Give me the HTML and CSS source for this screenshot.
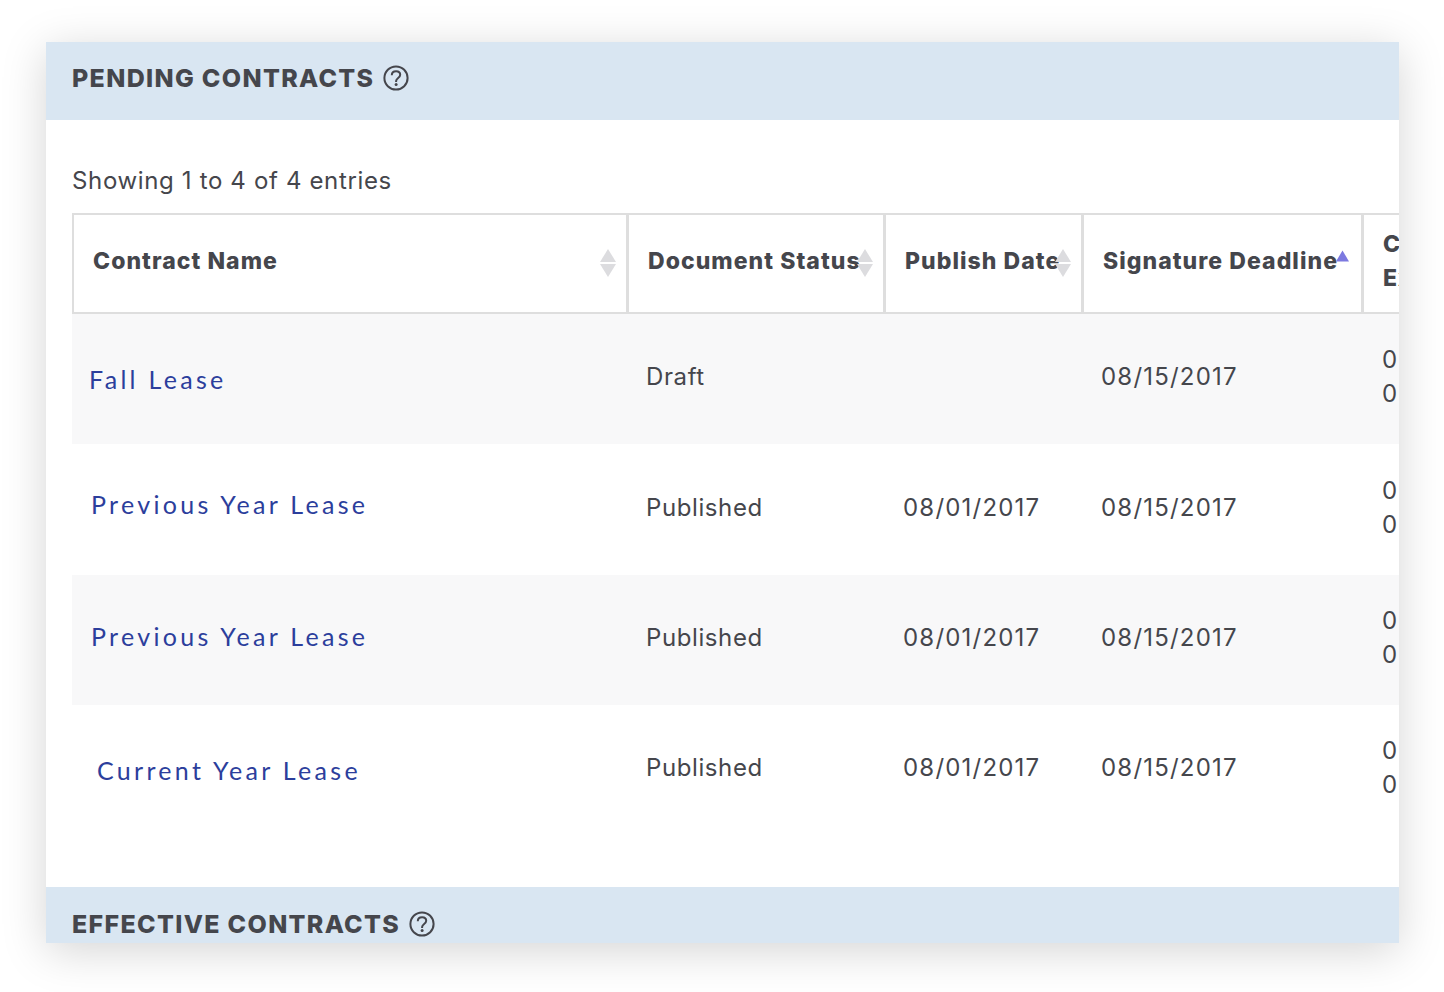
FILE: index.html
```html
<!DOCTYPE html>
<html lang="en">
<head>
<meta charset="utf-8">
<title>Contracts</title>
<link rel="stylesheet" href="styles.css">
</head>
<body>
<main class="window">
  <header class="band band-top">
    <h2>PENDING CONTRACTS</h2>
    <svg class="help" viewBox="0 0 26 26"><circle cx="13" cy="13" r="11.6"/><path d="M8.8 10.2c0-2.6 1.9-4 4.3-4s4.1 1.4 4.1 3.6c0 3.2-4.1 3.2-4.1 6.3v.8"/><circle class="dot" cx="13.1" cy="19.6" r="1.5"/></svg>
  </header>
  <section class="content">
    <p class="info">Showing 1 to 4 of 4 entries</p>
    <table>
      <colgroup><col class="c1"><col class="c2"><col class="c3"><col class="c4"><col class="c5"></colgroup>
      <thead>
        <tr>
          <th class="first">Contract Name<svg class="sort" viewBox="0 0 16 28"><path d="M8 0l8 13H0z"/><path d="M0 15h16L8 28z"/></svg></th>
          <th>Document Status<svg class="sort" viewBox="0 0 16 28"><path d="M8 0l8 13H0z"/><path d="M0 15h16L8 28z"/></svg></th>
          <th>Publish Date<svg class="sort" viewBox="0 0 16 28"><path d="M8 0l8 13H0z"/><path d="M0 15h16L8 28z"/></svg></th>
          <th>Signature Deadline<svg class="sort-up" viewBox="0 0 14 12"><path d="M7 0l7 12H0z"/></svg></th>
          <th class="wrap">Contract<br>Execution</th>
        </tr>
      </thead>
      <tbody>
        <tr class="odd">
          <td class="name"><a class="l1" href="#">Fall Lease</a></td>
          <td>Draft</td><td></td><td class="date">08/15/2017</td><td class="date last">08/15/2017<br>08/15/2017</td>
        </tr>
        <tr>
          <td class="name"><a class="l2" href="#">Previous Year Lease</a></td>
          <td>Published</td><td class="date">08/01/2017</td><td class="date">08/15/2017</td><td class="date last">08/15/2017<br>08/15/2017</td>
        </tr>
        <tr class="odd">
          <td class="name"><a class="l3" href="#">Previous Year Lease</a></td>
          <td>Published</td><td class="date">08/01/2017</td><td class="date">08/15/2017</td><td class="date last">08/15/2017<br>08/15/2017</td>
        </tr>
        <tr>
          <td class="name"><a class="l4" href="#">Current Year Lease</a></td>
          <td>Published</td><td class="date">08/01/2017</td><td class="date">08/15/2017</td><td class="date last">08/15/2017<br>08/15/2017</td>
        </tr>
      </tbody>
    </table>
  </section>
  <header class="band band-low">
    <h2>EFFECTIVE CONTRACTS</h2>
    <svg class="help" viewBox="0 0 26 26"><circle cx="13" cy="13" r="11.6"/><path d="M8.8 10.2c0-2.6 1.9-4 4.3-4s4.1 1.4 4.1 3.6c0 3.2-4.1 3.2-4.1 6.3v.8"/><circle class="dot" cx="13.1" cy="19.6" r="1.5"/></svg>
  </header>
</main>
</body>
</html>
```
FILE: styles.css
```css
* { box-sizing: border-box; }
html, body { margin: 0; background: #fff; }
body { height: 992px; padding: 42px 45px 49px 46px; font-family: "Inter", "Liberation Sans", sans-serif; color: #45464c; overflow: hidden; }
.window { height: 901px; background: #fff; overflow: hidden; box-shadow: 0 8px 42px rgba(0,0,0,.17); display: flex; flex-direction: column; }
.band { height: 78px; flex: none; background: #d9e6f2; padding: 0 0 0 26px; display: flex; align-items: center; gap: 9px; }
.band-top { padding-bottom: 6px; }
.band h2 { margin: 0; font-size: 25px; font-weight: 800; color: #45464c; letter-spacing: 1.32px; line-height: 30px; }
.band-low { height: 56px; padding-top: 17px; gap: 9px; }
.help { width: 26px; height: 26px; fill: none; stroke: #45464c; stroke-width: 2; }
.help .dot { fill: #45464c; stroke: none; }
.content { flex: 1; padding: 0 0 0 26px; overflow: hidden; }
.info { margin: 47px 0 19px; height: 27px; font-size: 24px; line-height: 27px; color: #45464c; letter-spacing: .65px; }
table { table-layout: fixed; width: 1344px; border-collapse: separate; border-spacing: 0; }
.c1 { width: 554px; } .c2 { width: 257px; } .c3 { width: 198px; } .c4 { width: 280px; } .c5 { width: 55px; }
th { position: relative; height: 101px; padding: 0 0 6px 19px; border: solid #dedede; border-width: 2px 0 2px 3px; text-align: left; font-size: 23px; font-weight: 800; letter-spacing: 1.05px; white-space: nowrap; color: #45464c; background: #fff; }
th.first { border-left-width: 2px; }
th.wrap { line-height: 34px; }
td { height: 130.4px; padding: 0 0 4px 20px; font-size: 24px; letter-spacing: .6px; line-height: 34px; white-space: nowrap; color: #45464c; vertical-align: middle; }
td.date { letter-spacing: 1.2px; }
td.last { padding-left: 21px; }
.odd td { background: #f8f8f9; }
.name { padding-left: 0; padding-bottom: 0; }
.name a { color: #2c3e9c; text-decoration: none; letter-spacing: 3.3px; font-size: 25px; font-family: "Lato", "Liberation Sans", sans-serif; display: block; }
.l1 { padding-left: 17px; }
.l2 { padding-left: 19px; margin-bottom: 11px; }
.l3 { padding-left: 19px; margin-bottom: 7px; }
.l4 { padding-left: 25px; }
.sort { position: absolute; top: 34px; right: 10px; width: 16px; height: 28px; fill: #dcdcdf; }
.sort-up { position: absolute; top: 35px; right: 12px; width: 13px; height: 12px; fill: #7c79e0; }
```
